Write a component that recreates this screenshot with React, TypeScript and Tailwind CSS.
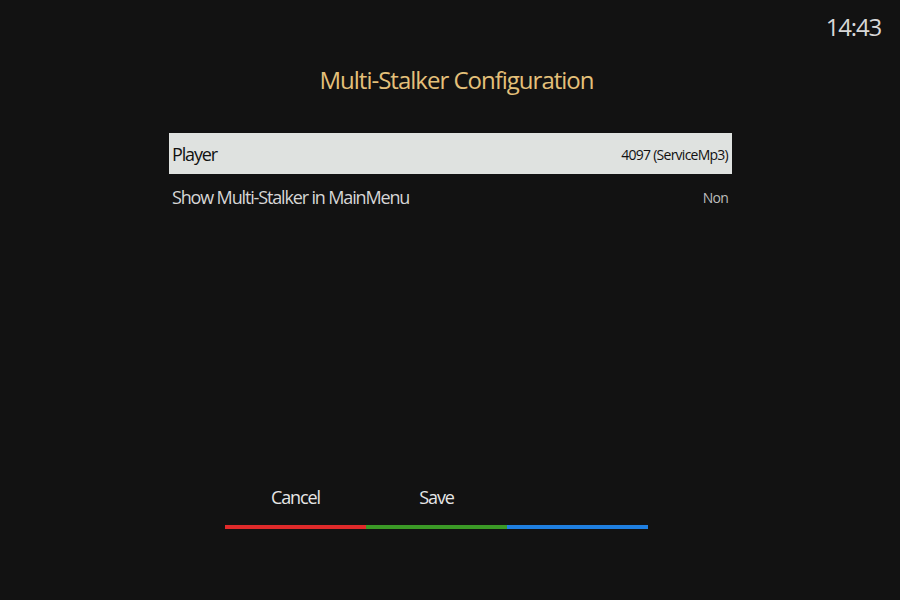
import React from 'react';

const rows = [
  { label: 'Player', value: '4097 (ServiceMp3)', selected: true },
  { label: 'Show Multi-Stalker in MainMenu', value: 'Non', selected: false },
];

const buttons = [
  { label: 'Cancel', bar: 'bg-[#e02a2a]' },
  { label: 'Save', bar: 'bg-[#3b9a26]' },
  { label: '', bar: 'bg-[#1f7fe0]' },
];

export default function App() {
  return (
    <div
      className="w-[900px] h-[600px] bg-[#121212] flex flex-col overflow-hidden"
      style={{ fontFamily: '"Open Sans", "DejaVu Sans", sans-serif' }}
    >
      <div className="flex justify-end pt-[10px] pr-[19px] h-[40px]">
        <span className="text-[24px] leading-[34px] text-[#d8d8d8] tracking-[-1.2px]">14:43</span>
      </div>

      <h1 className="mt-[23px] pl-[13px] text-center text-[24px] leading-[34px] text-[#e4c07a] tracking-[-1px]">
        Multi-Stalker Configuration
      </h1>

      <div className="mt-[36px] ml-[169px] w-[563px] flex flex-col">
        {rows.map((r) => (
          <div
            key={r.label}
            className={`flex items-center justify-between pl-[3px] pr-[4px] ${
              r.selected ? 'h-[41px] pt-[1px] bg-[#dfe2e0] text-[#111]' : 'h-[44px] pt-[3px] text-[#d6d6d6]'
            }`}
          >
            <span className="text-[18px] tracking-[-1.15px]">{r.label}</span>
            <span className={`text-[14px] tracking-[-0.75px] ${r.selected ? 'text-[#111]' : 'text-[#bdbdbd]'}`}>
              {r.value}
            </span>
          </div>
        ))}
      </div>

      <div className="mt-auto mb-[71px] ml-[225px] flex">
        {buttons.map((b, i) => (
          <div key={i} className="w-[141px] flex flex-col items-center">
            <span className="h-[28px] text-[18px] leading-[28px] text-[#e6e6e6] tracking-[-1.1px]">{b.label}</span>
            <div className={`mt-[14px] h-[4px] w-full ${b.bar}`} />
          </div>
        ))}
      </div>
    </div>
  );
}
